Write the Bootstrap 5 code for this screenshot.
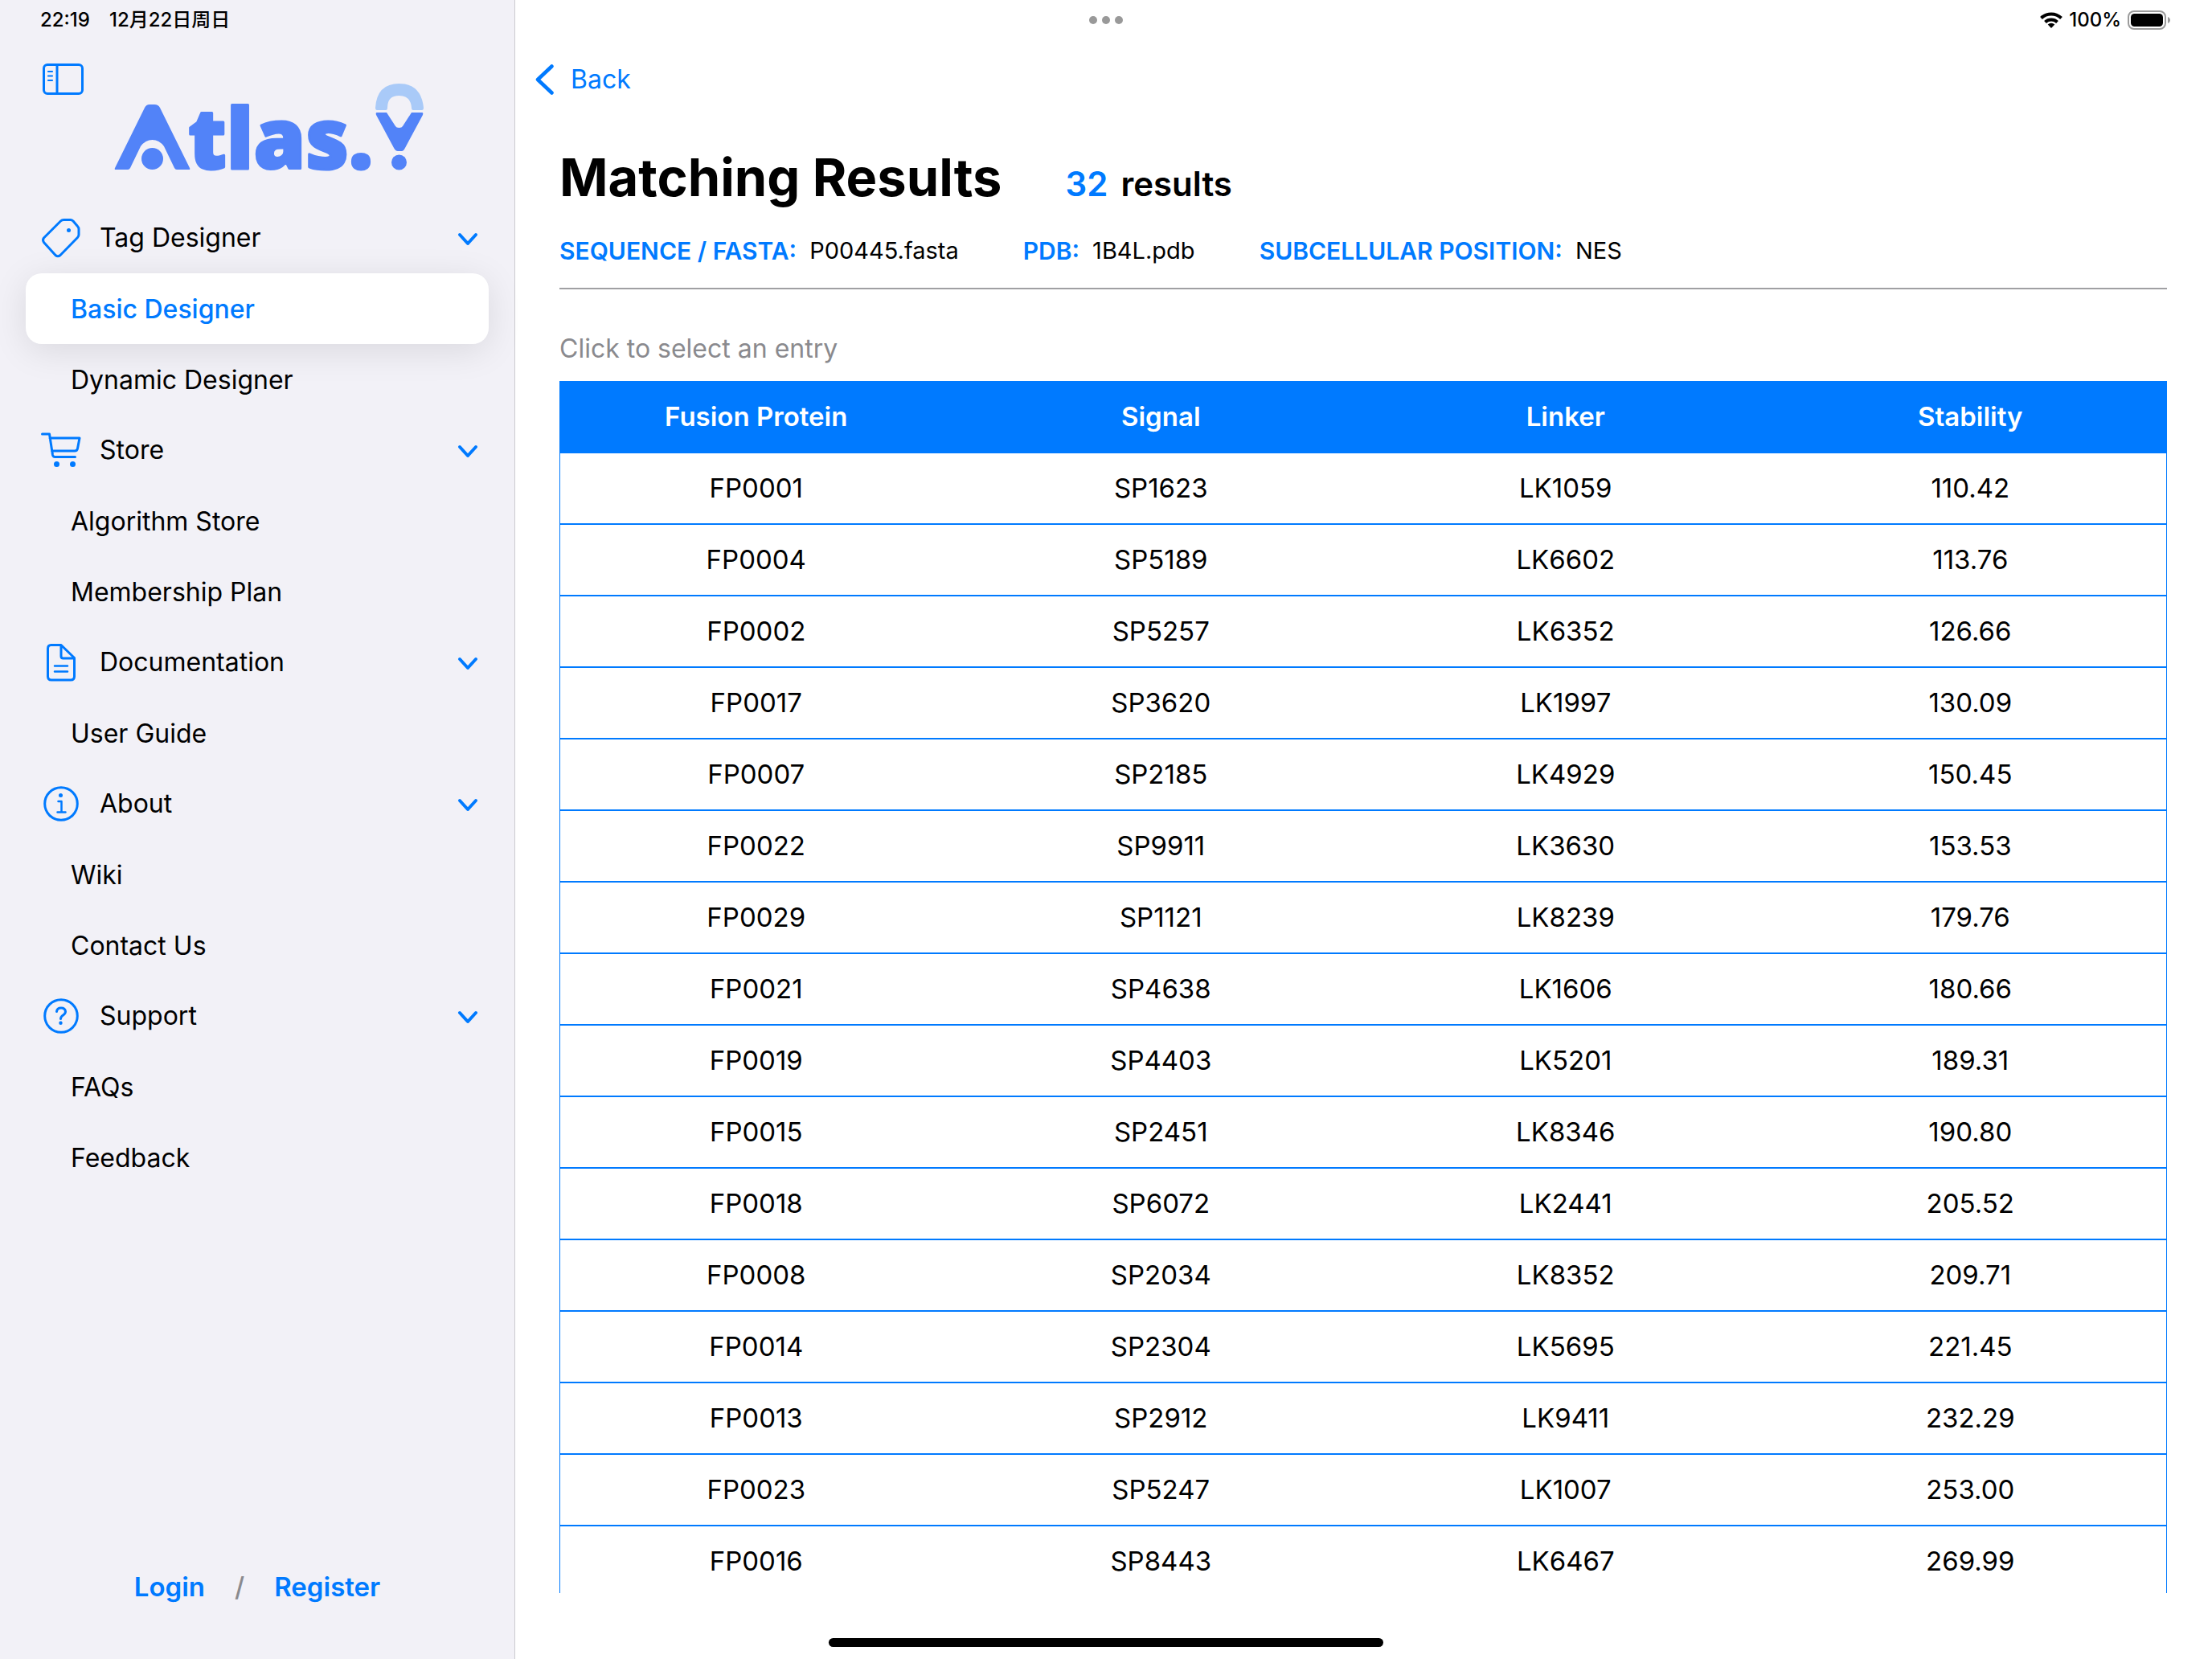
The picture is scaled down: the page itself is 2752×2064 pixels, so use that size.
<!DOCTYPE html>
<html lang="en">
<head>
<meta charset="utf-8">
<meta name="viewport" content="width=device-width, initial-scale=1">
<title>Atlas.Y – Matching Results</title>
<link href="https://cdn.jsdelivr.net/npm/bootstrap@5.3.0/dist/css/bootstrap.min.css" rel="stylesheet">
<style>
  :root { --tint: #007aff; --side: #f2f1f7; --muted: #8a8a8e; }
  body { font-family: Inter, "Noto Sans CJK SC", sans-serif; font-size: 32px; line-height: 40px; color: #000; background: #fff; }
  a { text-decoration: none; }
  svg { display: block; flex: none; }
  .plain { background: none; border: 0; padding: 0; color: inherit; text-align: left; }
  .tint { color: var(--tint); }
  .muted { color: var(--muted); }
  .line-icon { fill: none; stroke: currentColor; stroke-width: 3; stroke-linecap: round; stroke-linejoin: round; }

  .status { height: 50px; padding: 0 51px 0 50px; font-size: 24px; line-height: 32px; font-weight: 500; z-index: 5; }
  .status > div { flex: 1 1 0; }
  .dots span { width: 10px; height: 10px; border-radius: 50%; background: #999; }
  .dots { gap: 6px; }

  .sidebar { width: 641px; background: var(--side); border-right: 1px solid #cbcacf; flex: none; }
  .side-top { padding: 79px 0 40px 53px; gap: 39px; }
  .brand { margin-top: 25px; overflow: visible; }
  .brand text { font-family: "Open Sans", "Noto Sans", sans-serif; font-weight: 800; font-size: 104px; }
  .side-menu { padding: 0 32px; }
  .group-head { height: 88px; padding: 0 12px 0 18px; }
  .group-icon { width: 52px; margin-right: 22px; }
  .chevron { margin-top: 4px; }
  .item { display: flex; align-items: center; height: 88px; padding: 2px 0 0 56px; border-radius: 20px; color: #000; }
  .item.current { background: #fff; color: var(--tint); font-weight: 500; box-shadow: 0 8px 44px rgba(0, 0, 0, .1); position: relative; }
  .account { gap: 37px; margin-bottom: 70px; font-size: 33px; font-weight: 600; }
  .account .muted { font-weight: 500; }

  .content { padding: 64px 56px 82px 55px; min-width: 0; }
  .back { height: 70px; gap: 21px; margin-left: -30px; }
  .head { margin-top: 47px; gap: 79px; }
  .head h1 { font-size: 65px; line-height: 80px; font-weight: 700; margin: 0; }
  .count { font-size: 42px; font-weight: 600; gap: 16px; }
  .meta { margin: 31px 0 26px; gap: 80px; font-size: 29px; }
  .meta dl, .meta dd { margin: 0; }
  .meta dl { gap: 16px; }
  .meta dt { font-size: 30px; font-weight: 600; color: var(--tint); }
  .rule { height: 2px; background: #a0a0a3; }
  .hint { margin: 54px 0 20px; }

  .results-pane { min-height: 0; }
  .results { table-layout: fixed; font-size: 33px; border: 1px solid var(--tint); border-top: 0; border-collapse: separate; border-spacing: 0; text-align: center; width: 100%; }
  .results th, .results td { padding: 0 8px; }
  .results th { height: 90px; padding-bottom: 2px; background: var(--tint); color: #fff; font-weight: 600; width: 25.2%; }
  .results th:first-child, .results th:last-child { width: 24.8%; }
  .results td { height: 89px; border-bottom: 2px solid var(--tint); }
  .results tr > :first-child { padding-left: 0; }
  .results tr > :last-child { padding-right: 0; }
  .home-bar { width: 690px; height: 11px; bottom: 15px; border-radius: 6px; background: #000; }
</style>
</head>
<body>
<svg class="d-none" aria-hidden="true">
  <symbol id="chev" viewBox="0 0 28 20"><path d="M4 4l10 11L24 4" fill="none" stroke="currentColor" stroke-width="4" stroke-linecap="round" stroke-linejoin="round"/></symbol>
</svg>

<header class="status position-absolute top-0 start-0 w-100 d-flex align-items-center">
  <div class="d-flex gap-4"><span>22:19</span><span>12月22日周日</span></div>
  <div class="dots d-flex justify-content-center"><span></span><span></span><span></span></div>
  <div class="d-flex justify-content-end align-items-center gap-2">
    <svg width="28" height="20" viewBox="0 0 28 20"><g fill="none" stroke="#000" stroke-width="4"><path d="M1.5 7.500a18 18 0 0 1 25 0"/><path d="M6.500 12.500a11 11 0 0 1 15 0"/></g><path d="M14 20l-4.300-4.400a6.200 6.200 0 0 1 8.600 0z"/></svg>
    <span>100%</span>
    <svg width="54" height="24" viewBox="0 0 54 24"><rect x="1" y="1" width="46" height="22" rx="7" fill="none" stroke="#9b9b9b" stroke-width="2"/><rect x="4" y="4" width="40" height="16" rx="4.500"/><path d="M50 8c4 1.500 4 6.500 0 8z" fill="#9b9b9b"/></svg>
  </div>
</header>

<div class="d-flex vh-100 overflow-hidden">
  <nav class="sidebar d-flex flex-column" aria-label="Main">
    <div class="side-top d-flex align-items-start">
      <button class="plain tint" type="button" aria-label="Toggle sidebar">
        <svg class="line-icon" width="51" height="39" viewBox="0 0 51 39"><rect x="1.500" y="1.500" width="48" height="36" rx="4.500"/><path d="M18 2v35"/><path d="M7 10h5M7 15.500h5M7 21h5" stroke-width="2.200"/></svg>
      </button>
      <svg class="brand" width="384" height="108" viewBox="0 0 384 108" role="img" aria-label="Atlas.Y">
        <g fill="#5283f8">
          <path d="M0 105L37 30Q39 26 43 26H49Q54 26 56 30L93 105Q94 107 92 107H77Q75 107 74 105L61 78Q55 70 46.500 70T32 78L19 105Q18 107 16 107H1Q-1 107 0 105Z"/>
          <circle cx="46.500" cy="93.500" r="13.500"/>
          <text x="91" y="106" stroke="#5283f8" stroke-width="3" stroke-linejoin="round">tlas.</text>
          <path d="M326 36H338L349 53Q350 55 353.500 55T358 53L369 36H382Q384 36 383 39L361 80Q359 84 357 84H352Q349 84 347 80L325 39Q324 36 326 36Z"/>
          <circle cx="353.500" cy="98" r="9.500"/>
        </g>
        <path d="M324 30Q326 0 353.500 0T384 30Q384 33 382 33H371Q369 33 369 30Q368 15 353.500 15T339 30Q339 33 337 33H326Q324 33 324 30Z" fill="#a9caf8"/>
      </svg>
    </div>

    <div class="side-menu">
      <button class="group-head plain w-100 d-flex align-items-center" type="button" data-bs-toggle="collapse" data-bs-target="#g1" aria-expanded="true">
        <span class="group-icon tint"><svg class="line-icon" width="52" height="52" viewBox="0 0 52 52"><path d="M29.500 3.500H37.500Q39.500 3.500 41 5L46.500 11.500Q48 13 48 15V22Q48 24 46.500 25.500L25 47.500Q22 50 19 47.500L4.500 31.500Q2.500 28.500 4.500 26L25.500 5Q27 3.500 29.500 3.500Z"/><circle cx="35.500" cy="16.500" r="2.500" fill="currentColor" stroke="none"/></svg></span>
        <span class="flex-grow-1">Tag Designer</span>
        <svg class="chevron tint" width="28" height="20"><use href="#chev"/></svg>
      </button>
      <div class="collapse show" id="g1">
        <a class="item current" href="#" aria-current="page">Basic Designer</a>
        <a class="item" href="#">Dynamic Designer</a>
      </div>

      <button class="group-head plain w-100 d-flex align-items-center" type="button" data-bs-toggle="collapse" data-bs-target="#g2" aria-expanded="true">
        <span class="group-icon tint"><svg class="line-icon" width="52" height="52" viewBox="0 0 52 52"><path d="M2.500 6H11.500L15.500 32Q16 34.500 18.500 34.500H43.500M12 11H49L46.500 24Q46 27 43 27H14.500"/><circle cx="20.500" cy="43.500" r="3.500" fill="currentColor" stroke="none"/><circle cx="40.500" cy="43.500" r="3.500" fill="currentColor" stroke="none"/></svg></span>
        <span class="flex-grow-1">Store</span>
        <svg class="chevron tint" width="28" height="20"><use href="#chev"/></svg>
      </button>
      <div class="collapse show" id="g2">
        <a class="item" href="#">Algorithm Store</a>
        <a class="item" href="#">Membership Plan</a>
      </div>

      <button class="group-head plain w-100 d-flex align-items-center" type="button" data-bs-toggle="collapse" data-bs-target="#g3" aria-expanded="true">
        <span class="group-icon tint"><svg class="line-icon" width="52" height="52" viewBox="0 0 52 52"><path d="M13.500 4.500H26L42.500 20.500V43.500Q42.500 48 38 48H14Q9.500 48 9.500 43.500V9Q9.500 4.500 13.500 4.500ZM26 4.500V18.500Q26 21 28.500 21H42"/><path d="M18 30.500H34M18 37.500H34" stroke-width="2.500"/></svg></span>
        <span class="flex-grow-1">Documentation</span>
        <svg class="chevron tint" width="28" height="20"><use href="#chev"/></svg>
      </button>
      <div class="collapse show" id="g3">
        <a class="item" href="#">User Guide</a>
      </div>

      <button class="group-head plain w-100 d-flex align-items-center" type="button" data-bs-toggle="collapse" data-bs-target="#g4" aria-expanded="true">
        <span class="group-icon tint"><svg class="line-icon" width="52" height="52" viewBox="0 0 52 52"><circle cx="26" cy="26" r="20.300"/><path d="M22.500 23H26.500V36M21.500 36.500H31.500" stroke-width="2.500"/><circle cx="25.500" cy="15.500" r="2.500" fill="currentColor" stroke="none"/></svg></span>
        <span class="flex-grow-1">About</span>
        <svg class="chevron tint" width="28" height="20"><use href="#chev"/></svg>
      </button>
      <div class="collapse show" id="g4">
        <a class="item" href="#">Wiki</a>
        <a class="item" href="#">Contact Us</a>
      </div>

      <button class="group-head plain w-100 d-flex align-items-center" type="button" data-bs-toggle="collapse" data-bs-target="#g5" aria-expanded="true">
        <span class="group-icon tint"><svg class="line-icon" width="52" height="52" viewBox="0 0 52 52"><circle cx="26" cy="26" r="20.300"/><path d="M20.500 20.500Q21 16 26 16T31.500 20.500Q31.500 23 28.500 25T25.500 29.500"/><circle cx="25.500" cy="34.800" r="2.200" fill="currentColor" stroke="none"/></svg></span>
        <span class="flex-grow-1">Support</span>
        <svg class="chevron tint" width="28" height="20"><use href="#chev"/></svg>
      </button>
      <div class="collapse show" id="g5">
        <a class="item" href="#">FAQs</a>
        <a class="item" href="#">Feedback</a>
      </div>
    </div>

    <div class="account mt-auto d-flex justify-content-center">
      <a class="tint" href="#">Login</a><span class="muted">/</span><a class="tint" href="#">Register</a>
    </div>
  </nav>

  <main class="content flex-grow-1 d-flex flex-column">
    <a class="back tint d-flex align-items-center align-self-start" href="#">
      <svg width="23" height="38" viewBox="0 0 23 38"><path d="M20.500 2.500L3 19l17.500 16.500" fill="none" stroke="currentColor" stroke-width="4.500" stroke-linecap="round" stroke-linejoin="round"/></svg>
      <span>Back</span>
    </a>
    <div class="head d-flex align-items-baseline">
      <h1>Matching Results</h1>
      <div class="count d-flex"><span class="tint">32</span><span>results</span></div>
    </div>
    <div class="meta d-flex">
      <dl class="d-flex"><dt>SEQUENCE / FASTA:</dt><dd>P00445.fasta</dd></dl>
      <dl class="d-flex"><dt>PDB:</dt><dd>1B4L.pdb</dd></dl>
      <dl class="d-flex"><dt>SUBCELLULAR POSITION:</dt><dd>NES</dd></dl>
    </div>
    <div class="rule"></div>
    <p class="hint muted">Click to select an entry</p>
    <div class="results-pane flex-grow-1 overflow-hidden">
      <table class="results">
        <thead><tr><th>Fusion Protein</th><th>Signal</th><th>Linker</th><th>Stability</th></tr></thead>
        <tbody>
          <tr><td>FP0001</td><td>SP1623</td><td>LK1059</td><td>110.42</td></tr>
          <tr><td>FP0004</td><td>SP5189</td><td>LK6602</td><td>113.76</td></tr>
          <tr><td>FP0002</td><td>SP5257</td><td>LK6352</td><td>126.66</td></tr>
          <tr><td>FP0017</td><td>SP3620</td><td>LK1997</td><td>130.09</td></tr>
          <tr><td>FP0007</td><td>SP2185</td><td>LK4929</td><td>150.45</td></tr>
          <tr><td>FP0022</td><td>SP9911</td><td>LK3630</td><td>153.53</td></tr>
          <tr><td>FP0029</td><td>SP1121</td><td>LK8239</td><td>179.76</td></tr>
          <tr><td>FP0021</td><td>SP4638</td><td>LK1606</td><td>180.66</td></tr>
          <tr><td>FP0019</td><td>SP4403</td><td>LK5201</td><td>189.31</td></tr>
          <tr><td>FP0015</td><td>SP2451</td><td>LK8346</td><td>190.80</td></tr>
          <tr><td>FP0018</td><td>SP6072</td><td>LK2441</td><td>205.52</td></tr>
          <tr><td>FP0008</td><td>SP2034</td><td>LK8352</td><td>209.71</td></tr>
          <tr><td>FP0014</td><td>SP2304</td><td>LK5695</td><td>221.45</td></tr>
          <tr><td>FP0013</td><td>SP2912</td><td>LK9411</td><td>232.29</td></tr>
          <tr><td>FP0023</td><td>SP5247</td><td>LK1007</td><td>253.00</td></tr>
          <tr><td>FP0016</td><td>SP8443</td><td>LK6467</td><td>269.99</td></tr>
        </tbody>
      </table>
    </div>
  </main>
</div>
<div class="home-bar position-absolute start-50 translate-middle-x"></div>
<script src="https://cdn.jsdelivr.net/npm/bootstrap@5.3.0/dist/js/bootstrap.bundle.min.js"></script>
</body>
</html>
